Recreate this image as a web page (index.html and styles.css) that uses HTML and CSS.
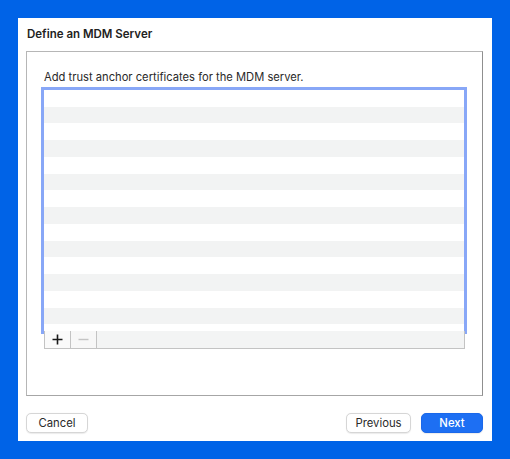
FILE: index.html
```html
<!DOCTYPE html>
<html>
<head>
<meta charset="utf-8">
<link rel="stylesheet" href="styles.css">
</head>
<body>
<div class="panel">
  <div class="title">Define an MDM Server</div>
  <div class="box">
    <div class="label">Add trust anchor certificates for the MDM server.</div>
    <div class="table"></div>
    <div class="bar">
      <div class="tool add">
        <svg width="11" height="11" viewBox="0 0 11 11"><path d="M5.5 0.5v10M0.5 5.5h10" stroke="#1a1a1a" stroke-width="1.6"/></svg>
      </div>
      <div class="tool remove">
        <svg width="11" height="11" viewBox="0 0 11 11"><path d="M0.5 5.5h10" stroke="#c4c4c4" stroke-width="1.4"/></svg>
      </div>
      <div class="bar-fill"></div>
    </div>
  </div>
  <div class="actions">
    <button class="btn cancel">Cancel</button>
    <div class="spacer"></div>
    <button class="btn prev">Previous</button>
    <button class="btn primary">Next</button>
  </div>
</div>
</body>
</html>
```
FILE: styles.css
```css
html, body {
  margin: 0;
  padding: 0;
}
body {
  background: #0063e7;
  width: 510px;
  height: 459px;
  overflow: hidden;
  font-family: Inter, "Liberation Sans", Arial, sans-serif;
  font-size: 11.2px;
  color: #222;
}
.panel {
  margin: 18px 0 0 18px;
  width: 474px;
  height: 423px;
  background: #ffffff;
  box-sizing: border-box;
  padding: 0 9px 0 8px;
  display: flex;
  flex-direction: column;
}
.title {
  padding: 8px 0 0 1px;
  height: 16px;
  line-height: 16px;
  margin-bottom: 9px;
  font-weight: 600;
  font-size: 11.5px;
  color: #222;
}
.box {
  box-sizing: border-box;
  height: 345px;
  border: 1px solid #b6b6b6;
  border-right-color: #8f8f8f;
  border-bottom-color: #a6a6a6;
  padding: 17px 18px 0 17px;
  display: flex;
  flex-direction: column;
}
.label {
  line-height: 17px;
  height: 16px;
  color: #2a2a2a;
}
.table {
  margin-top: 5px;
  width: 420px;
  height: 241px;
  outline: 3px solid #88a7f7;
  background: repeating-linear-gradient(to bottom, #ffffff 0, #ffffff 16.75px, #f2f3f3 16.75px, #f2f3f3 33.5px);
}
.bar {
  width: 421px;
  height: 18px;
  box-sizing: border-box;
  border: 1px solid #c3c3c3;
  border-top: none;
  background: #f6f6f6;
  display: flex;
}
.tool {
  width: 25px;
  border-right: 1px solid #c3c3c3;
  display: flex;
  align-items: center;
  justify-content: center;
  background: #f7f7f7;
}
.add {
  background: #fafafa;
}
.bar-fill {
  flex: 1;
  background: #f3f4f4;
}
.actions {
  margin-top: 17px;
  display: flex;
  align-items: center;
  height: 20px;
}
.spacer {
  flex: 1;
}
.btn {
  font-family: Inter, "Liberation Sans", Arial, sans-serif;
  font-size: 11.3px;
  height: 20px;
  box-sizing: border-box;
  border-radius: 5px;
  border: 1px solid #d6d6d6;
  background: #ffffff;
  color: #2a2a2a;
  padding: 0;
  line-height: 18px;
  box-shadow: 0 0.5px 1px rgba(0,0,0,0.08);
}
.cancel {
  width: 62px;
}
.prev {
  width: 65px;
  margin-right: 10px;
}
.primary {
  width: 62px;
  background: #1d6ff3;
  border-color: #1a68ea;
  color: #ffffff;
  font-weight: 500;
}
```
